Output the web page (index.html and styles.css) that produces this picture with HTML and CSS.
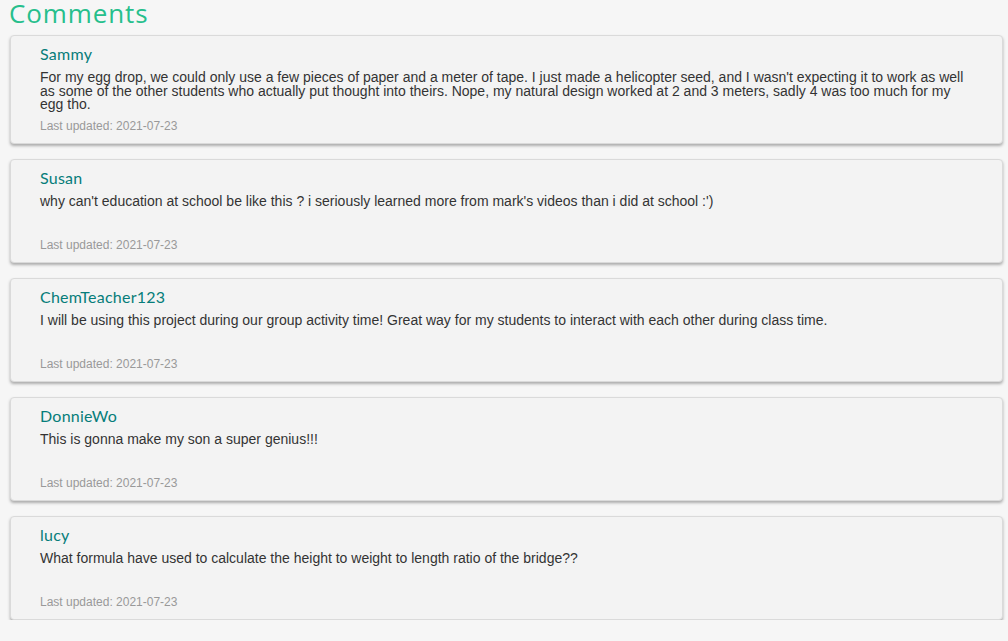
FILE: index.html
```html
<!DOCTYPE html>
<html lang="en">
<head>
<meta charset="utf-8">
<title>Comments</title>
<link rel="stylesheet" href="styles.css">
</head>
<body>
<div class="page">
  <h1 class="title">Comments</h1>
  <div class="list">
    <div class="card">
      <div class="name">Sammy</div>
      <div class="text">For my egg drop, we could only use a few pieces of paper and a meter of tape. I just made a helicopter seed, and I wasn't expecting it to work as well as some of the other students who actually put thought into theirs. Nope, my natural design worked at 2 and 3 meters, sadly 4 was too much for my egg tho.</div>
      <div class="meta">Last updated: 2021-07-23</div>
    </div>
    <div class="card">
      <div class="name">Susan</div>
      <div class="text">why can't education at school be like this ? i seriously learned more from mark's videos than i did at school :')</div>
      <div class="meta">Last updated: 2021-07-23</div>
    </div>
    <div class="card">
      <div class="name">ChemTeacher123</div>
      <div class="text">I will be using this project during our group activity time! Great way for my students to interact with each other during class time.</div>
      <div class="meta">Last updated: 2021-07-23</div>
    </div>
    <div class="card">
      <div class="name">DonnieWo</div>
      <div class="text">This is gonna make my son a super genius!!!</div>
      <div class="meta">Last updated: 2021-07-23</div>
    </div>
    <div class="card">
      <div class="name">lucy</div>
      <div class="text">What formula have used to calculate the height to weight to length ratio of the bridge??</div>
      <div class="meta">Last updated: 2021-07-23</div>
    </div>
  </div>
</div>
</body>
</html>
```
FILE: styles.css
```css
html, body {
  margin: 0;
  padding: 0;
  background: #f6f6f6;
}
.page {
  padding: 0 5px 0 10px;
}
.title {
  margin: 0 0 0 -1px;
  padding-top: 3px;
  font-family: "Open Sans", "Lato", sans-serif;
  font-weight: 400;
  font-size: 26px;
  line-height: 21px;
  letter-spacing: 0.9px;
  color: #26bf8c;
}
.list {
  display: flex;
  flex-direction: column;
  gap: 15px;
  margin-top: 11px;
}
.card {
  background: #f3f3f3;
  border: 1px solid #dadada;
  border-radius: 4px;
  box-shadow: 0 2px 3px rgba(0, 0, 0, 0.3);
  padding: 9px 35px 10px 29px;
}
.name {
  font-family: "Lato", sans-serif;
  font-size: 16px;
  letter-spacing: 0.25px;
  line-height: 18px;
  color: #067d7a;
}
.text {
  margin-top: 8px;
  min-height: 36px;
  font-family: "Liberation Sans", Arial, sans-serif;
  font-size: 14px;
  line-height: 13.5px;
  color: #333;
}
.meta {
  margin-top: 8px;
  font-family: "Liberation Sans", Arial, sans-serif;
  font-size: 12px;
  line-height: 13px;
  color: #999;
}
```
